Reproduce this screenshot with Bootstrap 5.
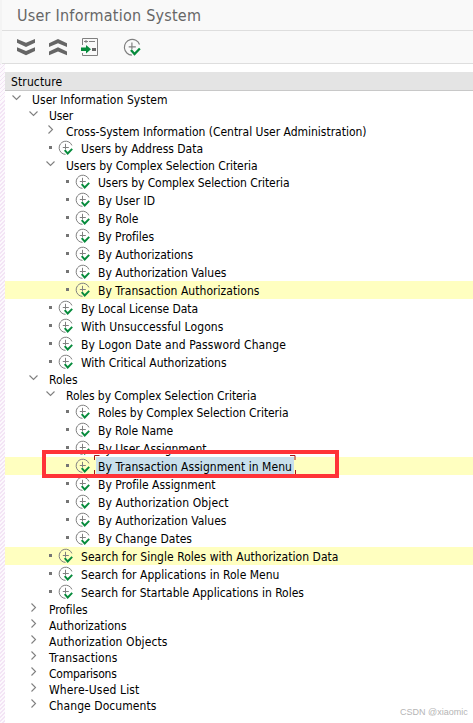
<!DOCTYPE html>
<html lang="en">
<head>
<meta charset="utf-8">
<meta name="viewport" content="width=device-width, initial-scale=1">
<title>User Information System</title>
<link href="https://cdn.jsdelivr.net/npm/bootstrap@5.3.0/dist/css/bootstrap.min.css" rel="stylesheet">
<style>
body{font-family:"DejaVu Sans Condensed","DejaVu Sans",sans-serif;font-stretch:condensed;font-size:12px;line-height:16px;color:#000;background:#fff}
.app{width:473px;height:723px;padding-left:2px}
.gutter{left:0;top:64px;width:5px;bottom:0;background:repeating-linear-gradient(135deg,#f3e4f5 0 1.4px,#fcf9fd 1.4px 2.83px)}
.edge{left:0;top:0;width:2px;height:64px;background:#f4f4f4}
.titlebar{height:31px;background:#f9f9f9;border-bottom:1px solid #dedede;padding:1px 0 0 15px;font-size:16px;color:#666;letter-spacing:.23px}
.tools{height:33px;background:#f9f9f9;border-bottom:1px solid #dedede;padding-left:15px}
.tools svg{display:block;flex:none}
.ic-chev{width:18px;height:18px;margin-right:14px}
.ic-pos{width:18px;height:18px;margin-right:24px}
.ic-run{width:19px;height:19px}
.pane{margin:8px 0 0 3px}
.head{height:19px;background:#e4e4e4;border-bottom:1px solid #c8c8c8;padding-left:6px;line-height:20px;letter-spacing:.12px}
.node{height:16px;white-space:nowrap}
.leaf{height:18px}
.node svg{flex:none;display:block}
.label{line-height:16px;padding-top:2px}
.leaf .label{padding-top:1px}
.hit{background:#ffffc0}
.l0{padding-left:6px}.l1{padding-left:23px}.l2{padding-left:40px}.l3{padding-left:57px}
.twist{width:11px;height:11px;margin-right:10px;margin-top:-3px}
.dot{width:3px;height:3px;background:#757575;margin:-1px 6px 0 4px;flex:none}
.exec{width:16px;height:16px;margin-right:7px}
.leaf .picked{background:#c8dfec;height:18px;padding:2px 2px 0;margin:0 -2px}
.corners{left:94px;top:455px;width:202px;height:19px}
.marker{left:42px;top:450px;width:297px;height:28px;border:4px solid #ff3338}
.credit{left:400px;top:706px;font:9px/12px "Liberation Sans",sans-serif;color:#b5b5b5}
</style>
<script src="https://cdn.jsdelivr.net/npm/bootstrap@5.3.0/dist/js/bootstrap.bundle.min.js"></script>
</head>
<body>
<svg class="d-none">
<symbol id="open" viewBox="0 0 11 11"><path d="M1.5 3.5l4 4 4-4" fill="none" stroke="#808080" stroke-width="1.1"/></symbol>
<symbol id="shut" viewBox="0 0 11 11"><path d="M3.5 1.5l4 4-4 4" fill="none" stroke="#808080" stroke-width="1.1"/></symbol>
<symbol id="run" viewBox="0 0 16 16"><path d="M7.5 14.4A6.6 6.6 0 1 1 13.9 5.4" fill="none" stroke="#808080" stroke-width="1"/><path d="M7.5 3.8v5.7M4.8 7.5h6" fill="none" stroke="#808080" stroke-width="1"/><path d="M6.7 10.2l3 3.3 4.5-4.7" fill="none" stroke="#078b3c" stroke-width="1.9"/></symbol>
</svg>
<main class="app position-relative overflow-hidden">
<div class="edge position-absolute"></div><div class="gutter position-absolute"></div>
<header class="titlebar d-flex align-items-center">User Information System</header>
<div class="tools d-flex align-items-center">
<svg class="ic-chev" viewBox="0 0 18 18"><path d="M0 1l9 3.8L18 1v3.8L9 9 0 4.8zM0 9.2L9 13l9-3.8V13l-9 4.2L0 13z" fill="#666"/></svg>
<svg class="ic-chev" viewBox="0 0 18 18"><path d="M0 9l9-3.8L18 9V5.2L9 1 0 5.2zM0 17.2l9-3.8 9 3.8v-3.8L9 9.2l-9 4.2z" fill="#666"/></svg>
<svg class="ic-pos" viewBox="0 0 18 18"><path d="M1.5 7V.5h15v17h-15V15" fill="none" stroke="#808080"/><path d="M3 3.5h4M8 3.5h6M5 2v3" stroke="#808080" fill="none"/><path d="M11 10h4v3h-4z" fill="#666"/><path d="M0 9.5h5V7l5 4.3-5 4.3V13H0z" fill="#078b3c"/></svg>
<svg class="ic-run"><use href="#run"/></svg>
</div>
<section class="pane">
<div class="head">Structure</div>
<div id="tree"></div>
</section>
<svg class="corners position-absolute" viewBox="0 0 202 19"><path d="M.5 5V.5h5M196 .5h5V5M.5 15v4M201.5 15v4" fill="none" stroke="#a01818"/></svg>
<div class="marker position-absolute"></div>
<div class="credit position-absolute">CSDN @xiaomic</div>
</main>
<script>
// level + kind (v open, > closed, . leaf, h highlighted, p picked) | label | right edge of the label
const rows = [
"0v|User Information System|167.5","1v|User|73","2>|Cross-System Information (Central User Administration)|366.5",
"2.|Users by Address Data|203","2v|Users by Complex Selection Criteria|257.5",
"3.|Users by Complex Selection Criteria|289.5","3.|By User ID|155","3.|By Role|138.5","3.|By Profiles|154","3.|By Authorizations|193","3.|By Authorization Values|226.5","3.h|By Transaction Authorizations|259.5",
"2.|By Local License Data|198","2.|With Unsuccessful Logons|223.5","2.|By Logon Date and Password Change|286","2.|With Critical Authorizations|226.5",
"1v|Roles|77.5","2v|Roles by Complex Selection Criteria|256.5",
"3.|Roles by Complex Selection Criteria|288.5","3.|By Role Name|173","3.|By User Assignment|206.5","3.hp|By Transaction Assignment in Menu|292","3.|By Profile Assignment|215.5","3.|By Authorization Object|228.5","3.|By Authorization Values|226.5","3.|By Change Dates|192",
"2.h|Search for Single Roles with Authorization Data|338.5","2.|Search for Applications in Role Menu|279.5","2.|Search for Startable Applications in Roles|304",
"1>|Profiles|87.5","1>|Authorizations|126.5","1>|Authorization Objects|167.5","1>|Transactions|117.5","1>|Comparisons|116.5","1>|Where-Used List|139.5","1>|Change Documents|156.5"];
document.getElementById("tree").innerHTML = rows.map(r => {
  const [k, t, e] = r.split("|"), leaf = k[1] === ".";
  const icon = leaf ? '<i class="dot"></i><svg class="exec"><use href="#run"/></svg>'
    : `<svg class="twist"><use href="#${k[1] === "v" ? "open" : "shut"}"/></svg>`;
  return `<div class="node d-flex align-items-center l${k[0]} ${leaf ? "leaf" : ""} ${k.includes("h") ? "hit" : ""}">${icon}<div class="label ${k.includes("p") ? "picked" : ""}"><span data-end="${e}">${t}</span></div></div>`;
}).join("");
document.querySelectorAll("[data-end]").forEach(s => {
  const b = s.getBoundingClientRect();
  s.style.letterSpacing = ((s.dataset.end - b.right) / s.textContent.length).toFixed(3) + "px";
});
</script>
</body>
</html>
